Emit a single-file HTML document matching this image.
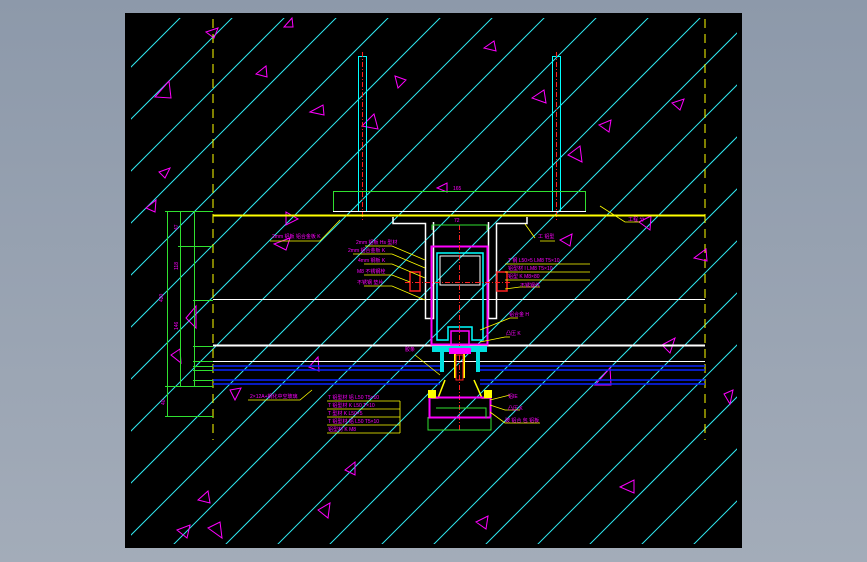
<!DOCTYPE html>
<html><head><meta charset="utf-8"><style>
html,body{margin:0;padding:0;width:867px;height:562px;overflow:hidden;background:linear-gradient(#8d99aa,#a3acb9);}
svg{position:absolute;left:0;top:0;display:block}
text{font-family:"Liberation Sans","Noto Sans CJK SC",sans-serif;font-size:5px;fill:#ff00ff}
</style></head><body>
<svg width="867" height="562" viewBox="0 0 867 562">
<defs><clipPath id="c"><rect x="131" y="18" width="606" height="526"/></clipPath></defs>
<rect x="125" y="13" width="617" height="535" fill="#000"/>
<g clip-path="url(#c)" stroke="#30e8f0" stroke-width="1">
<path d="M-402 600L198 0M-350 600L250 0M-298 600L302 0M-246 600L354 0M-194 600L406 0M-142 600L458 0M-90 600L510 0M-38 600L562 0M14 600L614 0M66 600L666 0M118 600L718 0M170 600L770 0M222 600L822 0M274 600L874 0M326 600L926 0M378 600L978 0M430 600L1030 0M482 600L1082 0M534 600L1134 0M586 600L1186 0M638 600L1238 0M690 600L1290 0"/>
</g>
<g stroke="#ffff00" stroke-width="1" stroke-dasharray="9 6">
<line x1="213" y1="19" x2="213" y2="440"/><line x1="705" y1="19" x2="705" y2="440"/>
</g>
<g fill="none" stroke="#ff00ff" stroke-width="1">
<path d="M206 32L218 28L214 38Z M256 74L266 66L267 77Z M155 97L169 81L171 98Z M159 172L170 168L165 178Z M292 18L284 27L293 27Z M310 112L323 105L324 115Z M362 126L374 114L378 129Z M395 76L406 80L398 88Z M484 48L494 41L496 51Z M532 98L544 90L546 103Z M599 125L611 120L609 132Z M568 155L580 146L582 162Z M672 103L684 99L680 110Z M437 188L447 183L447 192Z M639 222L651 216L650 230Z M560 240L572 234L570 246Z M694 258L706 249L707 261Z M146 208L156 200L155 212Z M286 212L298 219L286 225Z M274 244L290 238L286 250Z M186 318L196 306L196 328Z M171 355L180 349L181 363Z M309 367L318 357L319 371Z M230 390L241 388L235 400Z M595 385L610 368L611 385Z M662 345L675 338L670 353Z M724 394L733 390L730 404Z M345 470L355 462L355 475Z M198 500L208 491L210 503Z M620 487L634 480L634 493Z M177 530L190 525L187 538Z M208 528L220 522L222 538Z M318 510L330 503L328 518Z M476 522L488 516L486 529Z"/>
</g>
<g fill="none">
<rect x="358.5" y="56.5" width="8" height="155" stroke="#00ffff"/>
<rect x="552.5" y="56.5" width="8" height="155" stroke="#00ffff"/>
<line x1="362.5" y1="52" x2="362.5" y2="220" stroke="#ff2020" stroke-dasharray="5 2 1 2"/>
<line x1="556.5" y1="52" x2="556.5" y2="220" stroke="#ff2020" stroke-dasharray="5 2 1 2"/>
<path d="M333.5 211V191.5H585.5V211" stroke="#30e030"/>
<line x1="333" y1="211.5" x2="586" y2="211.5" stroke="#fff"/>
<line x1="213" y1="215.5" x2="705" y2="215.5" stroke="#ffff00" stroke-width="2"/>
<line x1="213" y1="299.5" x2="705" y2="299.5" stroke="#fff"/>
<line x1="213" y1="345.5" x2="705" y2="345.5" stroke="#fff" stroke-width="2"/>
<line x1="213" y1="361.5" x2="705" y2="361.5" stroke="#fff"/>
<g stroke="#0a24ff" stroke-width="1.5">
<line x1="213" y1="366" x2="440" y2="366"/><line x1="480" y1="366" x2="705" y2="366"/>
<line x1="213" y1="370" x2="440" y2="370"/><line x1="480" y1="370" x2="705" y2="370"/>
<line x1="213" y1="380" x2="440" y2="380"/><line x1="480" y1="380" x2="705" y2="380"/>
<line x1="213" y1="384" x2="440" y2="384"/><line x1="480" y1="384" x2="705" y2="384"/>
</g>
<g stroke="#30e030">
<line x1="167.5" y1="211" x2="167.5" y2="416"/><line x1="180.5" y1="211" x2="180.5" y2="386"/><line x1="194.5" y1="211" x2="194.5" y2="386"/>
<path d="M165 211.5H213M178 246.5H213M193 300.5H213M193 346.5H213M193 361.5H213M193 366.5H213M193 370.5H213M193 380.5H213M165 386.5H213M165 416.5H213"/>
</g>
<path d="M393 217V223.5H425.5V318.5H433.5V222" stroke="#fff" stroke-width="1.5"/>
<path d="M527 217V223.5H496.5V318.5H488.5V222" stroke="#fff" stroke-width="1.5"/>
<rect x="431.5" y="246.5" width="56" height="98" stroke="#ff00ff" stroke-width="2"/>
<path d="M437 340V253H483V340H472V327H448V340Z" stroke="#00ffff" stroke-width="1.5"/>
<path d="M440 256H480V285H440Z" stroke="#fff"/>
<rect x="451" y="331" width="18" height="14" stroke="#ff00ff" stroke-width="1.5"/>
<line x1="405" y1="282.5" x2="512" y2="282.5" stroke="#ff2020" stroke-dasharray="5 2 1 2"/>
<line x1="459.5" y1="225" x2="459.5" y2="430" stroke="#ff2020" stroke-dasharray="5 2 1 2"/>
<rect x="410" y="272" width="10" height="19" stroke="#ff2020" stroke-width="1.5"/>
<rect x="497" y="272" width="10" height="19" stroke="#ff2020" stroke-width="1.5"/>
<path d="M432 230V225H487V230" stroke="#30e030"/>
<path d="M432 346H487V352H480V372H476V352H444V372H440V352H432Z" fill="#00e0e0" stroke="none"/>
<rect x="449" y="348" width="22" height="6" fill="#ff00ff"/>
<path d="M455 354V378M464 354V378" stroke="#ffff00" stroke-width="2"/>
<rect x="456" y="355" width="7" height="25" stroke="#ff2020"/>
<path d="M445 380L438 398H430M474 380L482 398H490" stroke="#ffff00" stroke-width="1.5"/>
<rect x="429.5" y="397.5" width="61" height="20" stroke="#ff00ff" stroke-width="2"/>
<rect x="428" y="390" width="8" height="8" fill="#ffff00"/><rect x="484" y="390" width="8" height="8" fill="#ffff00"/>
<path d="M428 417V430H491V417M436 408H486V418" stroke="#30e030"/>
<g stroke="#ffff00" stroke-width="0.8">
<path d="M365 246H392L425 260M353 254H392L425 268M364 264H392L425 278M364 275H392L410 282M364 286H392L425 300"/>
<path d="M505 264H590M505 272H590M505 280H590M505 289L520 287H540"/>
<path d="M480 330L510 318H518M480 342L505 337H510"/>
<path d="M415 355L440 375M327 401H400M327 409H400M327 417H400M327 425H400M327 433H400M400 401V433"/>
<path d="M490 400L510 395M490 405L505 410H520M490 412L505 423H540"/>
<path d="M270 241H320L340 220M248 400H300L312 390M540 241H555M525 224L535 238M600 206L625 222H640"/>
</g>
</g>
<text x="356" y="244">2mm 铝板 Hs 型材</text>
<text x="348" y="252">2mm 铝合金板 K</text>
<text x="358" y="262">4mm 钢板 K</text>
<text x="357" y="273">M8 不锈钢栓</text>
<text x="357" y="284">不锈钢 垫片</text>
<text x="508" y="262">T 钢 L50×5 LM8 T5×10</text>
<text x="508" y="270">铝型材 I LM8 T5×10</text>
<text x="508" y="278">铝型 K    M8×80</text>
<text x="520" y="287">不锈钢件</text>
<text x="509" y="316">铝合金 H</text>
<text x="506" y="335">凸压 K</text>
<text x="405" y="351">胶条</text>
<text x="328" y="399">T 铝型材 铝  L50 T5×10</text>
<text x="328" y="407">T 铝型材 K   L50 T×10</text>
<text x="328" y="415">T 型材 K    L50×5</text>
<text x="328" y="423">T 铝型材 铝  L50 T5×10</text>
<text x="328" y="431">铝型材 K    M8</text>
<text x="508" y="398">铝IE</text>
<text x="508" y="410">凸压 K</text>
<text x="505" y="422">玻 铝合 包 铝板</text>
<text x="272" y="238">2mm 铝板 铝合金板 K</text>
<text x="250" y="398">2×12A+钢化中空玻璃</text>
<text x="538" y="238">工 铝型</text>
<text x="628" y="221">工程 分</text>
<text x="454" y="222">72</text>
<text x="453" y="190">165</text>
<g font-size="4"><text x="161" y="300" transform="rotate(-90 163 300)">420</text>
<text x="178" y="230" transform="rotate(-90 178 230)">47</text>
<text x="178" y="270" transform="rotate(-90 178 270)">118</text>
<text x="178" y="330" transform="rotate(-90 178 330)">146</text>
<text x="165" y="405" transform="rotate(-90 165 405)">40</text></g>
</svg>
</body></html>
